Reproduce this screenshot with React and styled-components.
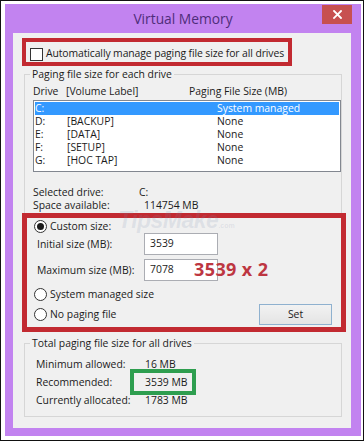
import styled, { createGlobalStyle } from "styled-components"

const GlobalStyle = createGlobalStyle`
  html, body {
    margin: 0;
    padding: 0;
    background: #fff;
  }
  body {
    font-family: "Open Sans", "Liberation Sans", sans-serif;
    font-size: 10.4px;
    line-height: 13px;
    color: #1b1b1b;
  }
  * { box-sizing: border-box; }
`

const drives = [
  { letter: "C:", label: "", size: "System managed", selected: true },
  { letter: "D:", label: "[BACKUP]", size: "None" },
  { letter: "E:", label: "[DATA]", size: "None" },
  { letter: "F:", label: "[SETUP]", size: "None" },
  { letter: "G:", label: "[HOC TAP]", size: "None" },
]

const totals = [
  { label: "Minimum allowed:", value: "16 MB" },
  { label: "Recommended:", value: "3539 MB", marked: true },
  { label: "Currently allocated:", value: "1783 MB" },
]

const App = () => {

  return (
    <Frame>
      <GlobalStyle />
      <Window>

        <TitleBar>
          <Title>Virtual Memory</Title>
          <CloseButton>
            <svg width="9" height="9" viewBox="0 0 9 9">
              <path d="M1 1 L8 8 M8 1 L1 8" stroke="#fff" strokeWidth="1.8" strokeLinecap="square" />
            </svg>
          </CloseButton>
        </TitleBar>

        <Content>

          <Watermark>TipsMake<small>.com</small></Watermark>

          <AutoBox>
            <Checkbox />
            <AutoText>Automatically manage paging file size for all drives</AutoText>
          </AutoBox>

          <Group $top={2}>
            <legend>Paging file size for each drive</legend>
            <GroupBody $pad="4px 0 0 8px">

              <Headers>
                <span>Drive</span>
                <span>[Volume Label]</span>
                <span>Paging File Size (MB)</span>
              </Headers>

              <DriveList>
                {drives.map(d => (
                  <DriveRow key={d.letter} $selected={d.selected}>
                    <span>{d.letter}</span>
                    <span>{d.label}</span>
                    <span>{d.size}</span>
                  </DriveRow>
                ))}
              </DriveList>

              <InfoRow $top={14}>
                <span>Selected drive:</span>
                <Value $x={106}>C:</Value>
              </InfoRow>
              <InfoRow>
                <span>Space available:</span>
                <Value $x={111}>114754 MB</Value>
              </InfoRow>

              <CustomBox>
                <Option>
                  <Radio $checked />
                  <span>Custom size:</span>
                </Option>

                <SizeRow>
                  <SizeLabel>Initial size (MB):</SizeLabel>
                  <SizeInput>3539</SizeInput>
                </SizeRow>

                <SizeRow $top={4}>
                  <SizeLabel>Maximum size (MB):</SizeLabel>
                  <SizeInput>7078</SizeInput>
                  <Note>3539 x 2</Note>
                </SizeRow>

                <Option $top={7}>
                  <Radio />
                  <span>System managed size</span>
                </Option>

                <BottomRow>
                  <Option>
                    <Radio />
                    <span>No paging file</span>
                  </Option>
                  <SetButton>Set</SetButton>
                </BottomRow>
              </CustomBox>

            </GroupBody>
          </Group>

          <Group $top={8}>
            <legend>Total paging file size for all drives</legend>
            <GroupBody $pad="5px 0 7px 11px">
              {totals.map(t => (
                <TotalRow key={t.label}>
                  <span>{t.label}</span>
                  <TotalValue $marked={t.marked}>{t.value}</TotalValue>
                </TotalRow>
              ))}
            </GroupBody>
          </Group>

        </Content>
      </Window>
    </Frame>
  )

}

const Frame = styled.div`
  width: 364px;
  height: 441px;
  border: 1px solid #111;
  padding: 3px 0 0 4px;
`

const Window = styled.div`
  width: 356px;
  height: 432px;
  background: #c283f0;
  display: flex;
  flex-direction: column;
`

const TitleBar = styled.div`
  height: 29px;
  flex: none;
  display: grid;
  grid-template-columns: 1fr auto 1fr;
`

const Title = styled.div`
  grid-column: 2;
  font-size: 13.8px;
  line-height: 29px;
  color: #4f2d7a;
`

const CloseButton = styled.div`
  justify-self: end;
  margin: 1px 9px 0 0;
  width: 30px;
  height: 19px;
  background: #c75050;
  display: flex;
  align-items: center;
  justify-content: center;
`

const Content = styled.div`
  position: relative;
  flex: 1;
  margin: 0 10px 8px 8px;
  background: #f0f0f0;
  padding-top: 5px;
  display: flex;
  flex-direction: column;
`

const Watermark = styled.div`
  position: absolute;
  left: 105px;
  top: 175px;
  font-family: "Liberation Sans", sans-serif;
  font-weight: bold;
  font-style: italic;
  font-size: 23px;
  line-height: 24px;
  color: rgba(120, 140, 175, 0.16);
  letter-spacing: -0.5px;

  small {
    font-size: 7px;
    font-style: normal;
    letter-spacing: 0;
  }
`

const AutoBox = styled.div`
  margin-left: 9px;
  width: 270px;
  height: 28px;
  border: 4px solid #c22a31;
  padding: 0 0 2px 4px;
  display: flex;
  align-items: flex-end;
  gap: 3px;
`

const AutoText = styled.span`
  white-space: nowrap;
  letter-spacing: -0.1px;
`

const Checkbox = styled.span`
  width: 13px;
  height: 13px;
  flex: none;
  border: 1px solid #333;
  background: #fff;
  margin-bottom: -1px;
`

const Group = styled.fieldset`
  margin: ${p => p.$top}px 0 0 11px;
  padding: 0;
  width: 318px;
  border: 1px solid #d6d6d6;
  min-width: 0;

  legend {
    margin-left: 5px;
    padding: 0 2px;
    line-height: 13px;
  }
`

const GroupBody = styled.div`
  padding: ${p => p.$pad};
  display: flex;
  flex-direction: column;
`

const Headers = styled.div`
  display: grid;
  grid-template-columns: 33px 123px 1fr;
`

const DriveList = styled.div`
  margin-top: 2px;
  height: 72px;
  border: 1px solid #828790;
  background: #fff;
  padding: 1px;
`

const DriveRow = styled.div`
  height: 13px;
  display: grid;
  grid-template-columns: 32px 150px 1fr;
  background: ${p => p.$selected ? "#3399ff" : "transparent"};
  color: ${p => p.$selected ? "#fff" : "inherit"};
`

const InfoRow = styled.div`
  margin-top: ${p => p.$top || 0}px;
  display: flex;
`

const Value = styled.span`
  position: relative;
  margin-left: auto;
  width: ${p => 308 - p.$x}px;
`

const CustomBox = styled.div`
  margin: 1px -5px -4px -11px;
  border: 5px solid #c22a31;
  padding: 2px 0 2px 7px;
  display: flex;
  flex-direction: column;
`

const Option = styled.div`
  margin-top: ${p => p.$top || 0}px;
  display: flex;
  align-items: center;
  gap: 3px;
`

const Radio = styled.span`
  width: 13px;
  height: 13px;
  flex: none;
  border: 1px solid #333;
  border-radius: 50%;
  background: #fff;
  display: flex;
  align-items: center;
  justify-content: center;

  &::after {
    content: "";
    width: 7px;
    height: 7px;
    border-radius: 50%;
    background: ${p => p.$checked ? "#1b1b1b" : "transparent"};
  }
`

const SizeRow = styled.div`
  position: relative;
  margin-top: ${p => p.$top || 0}px;
  height: 22px;
  display: flex;
  align-items: center;
`

const SizeLabel = styled.span`
  width: 110px;
  padding-left: 3px;
`

const SizeInput = styled.div`
  width: 74px;
  height: 22px;
  border: 1px solid #abadb3;
  background: #fff;
  padding: 3px 0 0 5px;
`

const Note = styled.span`
  position: absolute;
  left: 160px;
  top: -1px;
  font-family: "Open Sans", sans-serif;
  font-weight: bold;
  font-size: 18px;
  line-height: 22px;
  letter-spacing: 0.4px;
  color: #bd3641;
`

const BottomRow = styled.div`
  margin-top: 3px;
  display: flex;
  align-items: center;
  justify-content: space-between;
`

const SetButton = styled.div`
  width: 73px;
  height: 21px;
  margin-right: 9px;
  border: 1px solid #8fb1cf;
  background: linear-gradient(#f2f2f2, #e4e4e4);
  display: flex;
  align-items: center;
  justify-content: center;
`

const TotalRow = styled.div`
  height: 18px;
  display: grid;
  grid-template-columns: 109px 1fr;
  align-items: center;
`

const TotalValue = styled.span`
  justify-self: start;
  line-height: 18px;
  ${p => p.$marked && `
    border: 4px solid #2e9e4f;
    padding: 0 4px 0 11px;
    margin: -4px 0 -4px -15px;
  `}
`

export default App
